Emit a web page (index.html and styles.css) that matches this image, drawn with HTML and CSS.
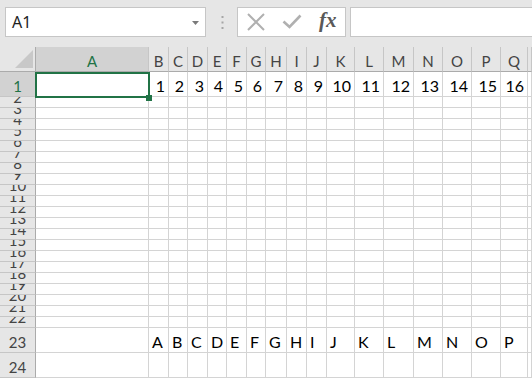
FILE: index.html
```html
<!DOCTYPE html>
<html>
<head>
<meta charset="utf-8">
<link rel="stylesheet" href="styles.css">
</head>
<body>
<div class="toolbar">
  <div class="namebox">
    <span class="nb-text">A1</span>
    <svg class="nb-arrow" width="7" height="4" viewBox="0 0 7 4"><polygon points="0,0 7,0 3.5,4" fill="#7a7a7a"/></svg>
  </div>
  <div class="dots">
    <svg width="3" height="13" viewBox="0 0 3 13"><rect x="0.5" y="0" width="2" height="2" fill="#a6a6a6"/><rect x="0.5" y="5.5" width="2" height="2" fill="#a6a6a6"/><rect x="0.5" y="11" width="2" height="2" fill="#a6a6a6"/></svg>
  </div>
  <div class="fxbox">
    <svg class="ic-x" width="18" height="18" viewBox="0 0 18 18"><path d="M1 1 L17 17 M17 1 L1 17" stroke="#b0b0b0" stroke-width="2" fill="none"/></svg>
    <svg class="ic-ok" width="20" height="15" viewBox="0 0 20 15"><path d="M1.5 7.5 L7.5 13 L18.5 1.5" stroke="#b0b0b0" stroke-width="2.6" fill="none"/></svg>
    <span class="fx">fx</span>
  </div>
  <div class="formula"></div>
</div>
<div class="sheet">
  <div class="corner"><svg width="35" height="24" viewBox="0 0 35 24"><polygon points="15,21 33,21 33,3" fill="#c8c8c8"/></svg></div><div class="ch sel">A</div><div class="ch">B</div><div class="ch">C</div><div class="ch">D</div><div class="ch">E</div><div class="ch">F</div><div class="ch">G</div><div class="ch">H</div><div class="ch">I</div><div class="ch">J</div><div class="ch">K</div><div class="ch">L</div><div class="ch">M</div><div class="ch">N</div><div class="ch">O</div><div class="ch">P</div><div class="ch">Q</div><div class="ch"></div>
  <div class="rh sel"><span>1</span></div><div class="c"></div><div class="c n">1</div><div class="c n">2</div><div class="c n">3</div><div class="c n">4</div><div class="c n">5</div><div class="c n">6</div><div class="c n">7</div><div class="c n">8</div><div class="c n">9</div><div class="c n">10</div><div class="c n">11</div><div class="c n">12</div><div class="c n">13</div><div class="c n">14</div><div class="c n">15</div><div class="c n">16</div><div class="c"></div>
  <div class="rh"><span>2</span></div><div class="c"></div><div class="c"></div><div class="c"></div><div class="c"></div><div class="c"></div><div class="c"></div><div class="c"></div><div class="c"></div><div class="c"></div><div class="c"></div><div class="c"></div><div class="c"></div><div class="c"></div><div class="c"></div><div class="c"></div><div class="c"></div><div class="c"></div><div class="c"></div>
  <div class="rh"><span>3</span></div><div class="c"></div><div class="c"></div><div class="c"></div><div class="c"></div><div class="c"></div><div class="c"></div><div class="c"></div><div class="c"></div><div class="c"></div><div class="c"></div><div class="c"></div><div class="c"></div><div class="c"></div><div class="c"></div><div class="c"></div><div class="c"></div><div class="c"></div><div class="c"></div>
  <div class="rh"><span>4</span></div><div class="c"></div><div class="c"></div><div class="c"></div><div class="c"></div><div class="c"></div><div class="c"></div><div class="c"></div><div class="c"></div><div class="c"></div><div class="c"></div><div class="c"></div><div class="c"></div><div class="c"></div><div class="c"></div><div class="c"></div><div class="c"></div><div class="c"></div><div class="c"></div>
  <div class="rh"><span>5</span></div><div class="c"></div><div class="c"></div><div class="c"></div><div class="c"></div><div class="c"></div><div class="c"></div><div class="c"></div><div class="c"></div><div class="c"></div><div class="c"></div><div class="c"></div><div class="c"></div><div class="c"></div><div class="c"></div><div class="c"></div><div class="c"></div><div class="c"></div><div class="c"></div>
  <div class="rh"><span>6</span></div><div class="c"></div><div class="c"></div><div class="c"></div><div class="c"></div><div class="c"></div><div class="c"></div><div class="c"></div><div class="c"></div><div class="c"></div><div class="c"></div><div class="c"></div><div class="c"></div><div class="c"></div><div class="c"></div><div class="c"></div><div class="c"></div><div class="c"></div><div class="c"></div>
  <div class="rh"><span>7</span></div><div class="c"></div><div class="c"></div><div class="c"></div><div class="c"></div><div class="c"></div><div class="c"></div><div class="c"></div><div class="c"></div><div class="c"></div><div class="c"></div><div class="c"></div><div class="c"></div><div class="c"></div><div class="c"></div><div class="c"></div><div class="c"></div><div class="c"></div><div class="c"></div>
  <div class="rh"><span>8</span></div><div class="c"></div><div class="c"></div><div class="c"></div><div class="c"></div><div class="c"></div><div class="c"></div><div class="c"></div><div class="c"></div><div class="c"></div><div class="c"></div><div class="c"></div><div class="c"></div><div class="c"></div><div class="c"></div><div class="c"></div><div class="c"></div><div class="c"></div><div class="c"></div>
  <div class="rh"><span>9</span></div><div class="c"></div><div class="c"></div><div class="c"></div><div class="c"></div><div class="c"></div><div class="c"></div><div class="c"></div><div class="c"></div><div class="c"></div><div class="c"></div><div class="c"></div><div class="c"></div><div class="c"></div><div class="c"></div><div class="c"></div><div class="c"></div><div class="c"></div><div class="c"></div>
  <div class="rh"><span>10</span></div><div class="c"></div><div class="c"></div><div class="c"></div><div class="c"></div><div class="c"></div><div class="c"></div><div class="c"></div><div class="c"></div><div class="c"></div><div class="c"></div><div class="c"></div><div class="c"></div><div class="c"></div><div class="c"></div><div class="c"></div><div class="c"></div><div class="c"></div><div class="c"></div>
  <div class="rh"><span>11</span></div><div class="c"></div><div class="c"></div><div class="c"></div><div class="c"></div><div class="c"></div><div class="c"></div><div class="c"></div><div class="c"></div><div class="c"></div><div class="c"></div><div class="c"></div><div class="c"></div><div class="c"></div><div class="c"></div><div class="c"></div><div class="c"></div><div class="c"></div><div class="c"></div>
  <div class="rh"><span>12</span></div><div class="c"></div><div class="c"></div><div class="c"></div><div class="c"></div><div class="c"></div><div class="c"></div><div class="c"></div><div class="c"></div><div class="c"></div><div class="c"></div><div class="c"></div><div class="c"></div><div class="c"></div><div class="c"></div><div class="c"></div><div class="c"></div><div class="c"></div><div class="c"></div>
  <div class="rh"><span>13</span></div><div class="c"></div><div class="c"></div><div class="c"></div><div class="c"></div><div class="c"></div><div class="c"></div><div class="c"></div><div class="c"></div><div class="c"></div><div class="c"></div><div class="c"></div><div class="c"></div><div class="c"></div><div class="c"></div><div class="c"></div><div class="c"></div><div class="c"></div><div class="c"></div>
  <div class="rh"><span>14</span></div><div class="c"></div><div class="c"></div><div class="c"></div><div class="c"></div><div class="c"></div><div class="c"></div><div class="c"></div><div class="c"></div><div class="c"></div><div class="c"></div><div class="c"></div><div class="c"></div><div class="c"></div><div class="c"></div><div class="c"></div><div class="c"></div><div class="c"></div><div class="c"></div>
  <div class="rh"><span>15</span></div><div class="c"></div><div class="c"></div><div class="c"></div><div class="c"></div><div class="c"></div><div class="c"></div><div class="c"></div><div class="c"></div><div class="c"></div><div class="c"></div><div class="c"></div><div class="c"></div><div class="c"></div><div class="c"></div><div class="c"></div><div class="c"></div><div class="c"></div><div class="c"></div>
  <div class="rh"><span>16</span></div><div class="c"></div><div class="c"></div><div class="c"></div><div class="c"></div><div class="c"></div><div class="c"></div><div class="c"></div><div class="c"></div><div class="c"></div><div class="c"></div><div class="c"></div><div class="c"></div><div class="c"></div><div class="c"></div><div class="c"></div><div class="c"></div><div class="c"></div><div class="c"></div>
  <div class="rh"><span>17</span></div><div class="c"></div><div class="c"></div><div class="c"></div><div class="c"></div><div class="c"></div><div class="c"></div><div class="c"></div><div class="c"></div><div class="c"></div><div class="c"></div><div class="c"></div><div class="c"></div><div class="c"></div><div class="c"></div><div class="c"></div><div class="c"></div><div class="c"></div><div class="c"></div>
  <div class="rh"><span>18</span></div><div class="c"></div><div class="c"></div><div class="c"></div><div class="c"></div><div class="c"></div><div class="c"></div><div class="c"></div><div class="c"></div><div class="c"></div><div class="c"></div><div class="c"></div><div class="c"></div><div class="c"></div><div class="c"></div><div class="c"></div><div class="c"></div><div class="c"></div><div class="c"></div>
  <div class="rh"><span>19</span></div><div class="c"></div><div class="c"></div><div class="c"></div><div class="c"></div><div class="c"></div><div class="c"></div><div class="c"></div><div class="c"></div><div class="c"></div><div class="c"></div><div class="c"></div><div class="c"></div><div class="c"></div><div class="c"></div><div class="c"></div><div class="c"></div><div class="c"></div><div class="c"></div>
  <div class="rh"><span>20</span></div><div class="c"></div><div class="c"></div><div class="c"></div><div class="c"></div><div class="c"></div><div class="c"></div><div class="c"></div><div class="c"></div><div class="c"></div><div class="c"></div><div class="c"></div><div class="c"></div><div class="c"></div><div class="c"></div><div class="c"></div><div class="c"></div><div class="c"></div><div class="c"></div>
  <div class="rh"><span>21</span></div><div class="c"></div><div class="c"></div><div class="c"></div><div class="c"></div><div class="c"></div><div class="c"></div><div class="c"></div><div class="c"></div><div class="c"></div><div class="c"></div><div class="c"></div><div class="c"></div><div class="c"></div><div class="c"></div><div class="c"></div><div class="c"></div><div class="c"></div><div class="c"></div>
  <div class="rh"><span>22</span></div><div class="c"></div><div class="c"></div><div class="c"></div><div class="c"></div><div class="c"></div><div class="c"></div><div class="c"></div><div class="c"></div><div class="c"></div><div class="c"></div><div class="c"></div><div class="c"></div><div class="c"></div><div class="c"></div><div class="c"></div><div class="c"></div><div class="c"></div><div class="c"></div>
  <div class="rh"><span>23</span></div><div class="c"></div><div class="c t">A</div><div class="c t">B</div><div class="c t">C</div><div class="c t">D</div><div class="c t">E</div><div class="c t">F</div><div class="c t">G</div><div class="c t">H</div><div class="c t">I</div><div class="c t">J</div><div class="c t">K</div><div class="c t">L</div><div class="c t">M</div><div class="c t">N</div><div class="c t">O</div><div class="c t">P</div><div class="c"></div>
  <div class="rh"><span>24</span></div><div class="c"></div><div class="c"></div><div class="c"></div><div class="c"></div><div class="c"></div><div class="c"></div><div class="c"></div><div class="c"></div><div class="c"></div><div class="c"></div><div class="c"></div><div class="c"></div><div class="c"></div><div class="c"></div><div class="c"></div><div class="c"></div><div class="c"></div><div class="c"></div>
  <div class="selection"></div>
  <div class="handle"></div>
</div>
</body>
</html>
```

FILE: styles.css
```css
html, body {
  margin: 0;
  padding: 0;
}
body {
  width: 532px;
  height: 379px;
  overflow: hidden;
  background: #ffffff;
  font-family: Lato, "Open Sans", sans-serif;
}

/* ---------- formula toolbar ---------- */
.toolbar {
  display: flex;
  height: 47px;
  box-sizing: border-box;
  padding: 7px 0 10px 5px;
  background: #e6e6e6;
}
.namebox {
  width: 201px;
  box-sizing: border-box;
  border: 1px solid #c6c6c6;
  background: #ffffff;
  display: flex;
  align-items: center;
  padding: 0 6px 0 6px;
}
.nb-text {
  flex: 1;
  font-family: "Noto Sans", "Open Sans", sans-serif;
  font-size: 16px;
  color: #1e1e1e;
}
.nb-arrow {
  display: block;
  margin-top: 1px;
}
.dots {
  width: 31px;
  display: flex;
  align-items: center;
  justify-content: center;
}
.dots svg {
  display: block;
  margin-left: 1px;
}
.fxbox {
  width: 109px;
  box-sizing: border-box;
  border: 1px solid #c6c6c6;
  background: #ffffff;
  display: flex;
  align-items: center;
  padding-left: 9px;
}
.ic-x {
  display: block;
}
.ic-ok {
  display: block;
  margin-left: 17px;
  margin-top: -1px;
}
.fx {
  margin-left: 17px;
  font-family: "Liberation Serif", "DejaVu Serif", serif;
  font-style: italic;
  font-weight: bold;
  font-size: 21px;
  line-height: 1;
  color: #595959;
  margin-top: -3px;
}
.formula {
  flex: 1;
  margin-left: 4px;
  border: 1px solid #c6c6c6;
  border-right: none;
  background: #ffffff;
}

/* ---------- sheet grid ---------- */
.sheet {
  position: relative;
  display: grid;
  grid-template-columns: 36px 113px 20px 19px 20px 19px 20px 19px 21px 20px 20px 28px 29px 30px 29px 29px 29px 27px 1fr;
  grid-template-rows: 25px 25px repeat(21, 11px) 25px 25px;
}
.sheet > * {
  box-sizing: border-box;
  border-right: 1px solid #d4d4d4;
  border-bottom: 1px solid #d4d4d4;
  overflow: hidden;
  display: flex;
  align-items: flex-end;
  min-width: 0;
  white-space: nowrap;
}
.corner {
  background: #e6e6e6;
  border-right-color: #ababab;
  border-bottom-color: #ababab;
  align-items: flex-start;
}
.corner svg {
  display: block;
}
.ch {
  background: #e6e6e6;
  border-right-color: #c6c6c6;
  border-bottom-color: #ababab;
  justify-content: center;
  font-size: 15px;
  line-height: 19px;
  color: #444444;
}
.rh {
  background: #e6e6e6;
  border-right-color: #ababab;
  border-bottom-color: #c6c6c6;
  justify-content: center;
  font-size: 15px;
  color: #444444;
}
.rh span {
  flex: none;
  line-height: 20px;
}
.sel {
  background: #d2d2d2;
  color: #217346;
}
.c {
  font-size: 16px;
  line-height: 20px;
  color: #000000;
}
.n {
  justify-content: flex-end;
  padding-right: 3px;
}
.t {
  padding-left: 3px;
}

/* ---------- active cell ---------- */
.sheet > .selection {
  position: absolute;
  left: 35px;
  top: 25px;
  width: 115px;
  height: 26px;
  box-sizing: border-box;
  border: 2px solid #217346;
}
.sheet > .handle {
  position: absolute;
  left: 146px;
  top: 48px;
  width: 6px;
  height: 6px;
  box-sizing: border-box;
  border: none;
  background: #217346;
}
```
